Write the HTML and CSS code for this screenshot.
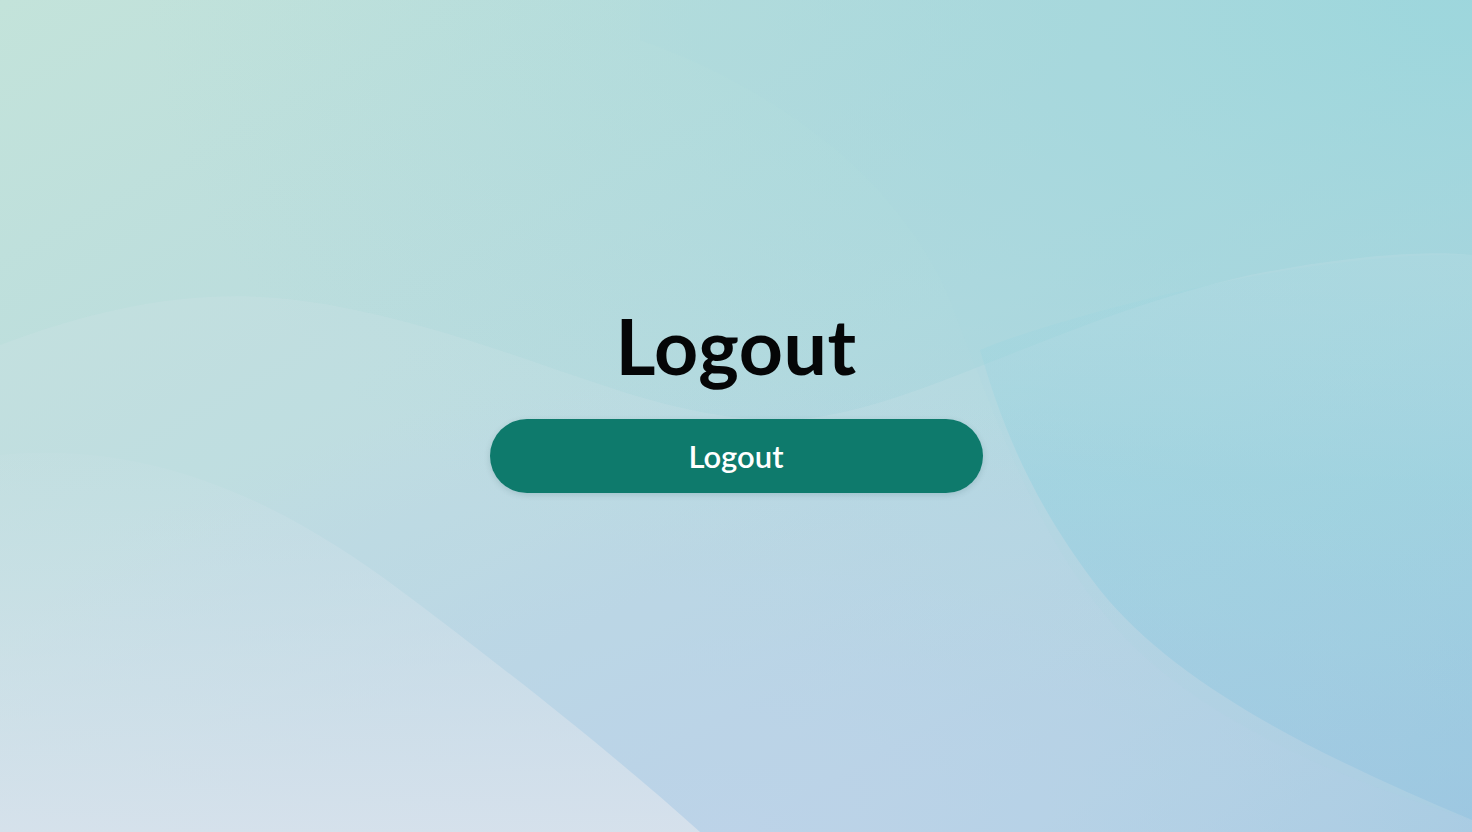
FILE: index.html
```html
<!DOCTYPE html>
<html lang="en">
<head>
<meta charset="utf-8">
<title>Logout</title>
<link rel="stylesheet" href="styles.css">
</head>
<body>
<svg class="backdrop" viewBox="0 0 1472 832" preserveAspectRatio="none" aria-hidden="true">
  <defs>
    <linearGradient id="base" x1="0" y1="0" x2="1" y2="1">
      <stop offset="0" stop-color="#c3e3da"/>
      <stop offset="0.5" stop-color="#b6d9e0"/>
      <stop offset="1" stop-color="#9cc5e1"/>
    </linearGradient>
    <radialGradient id="tr" cx="1" cy="0" r="0.9">
      <stop offset="0" stop-color="#98d6dc" stop-opacity="0.85"/>
      <stop offset="1" stop-color="#a6dada" stop-opacity="0"/>
    </radialGradient>
    <radialGradient id="bc" cx="0.5" cy="1" r="0.55">
      <stop offset="0" stop-color="#b8cfe9" stop-opacity="0.9"/>
      <stop offset="1" stop-color="#b8cfe9" stop-opacity="0"/>
    </radialGradient>
    <linearGradient id="bl" x1="0" y1="0" x2="0" y2="1">
      <stop offset="0" stop-color="#d4e3ea" stop-opacity="0.1"/>
      <stop offset="1" stop-color="#d8e2ec" stop-opacity="0.9"/>
    </linearGradient>
    <linearGradient id="rb" x1="0" y1="0" x2="0" y2="1">
      <stop offset="0" stop-color="#9ad6e0" stop-opacity="0.15"/>
      <stop offset="0.4" stop-color="#8ccfdf" stop-opacity="0.4"/>
      <stop offset="1" stop-color="#8fc0e0" stop-opacity="0.45"/>
    </linearGradient>
  </defs>
  <rect width="1472" height="832" fill="url(#base)"/>
  <rect width="1472" height="832" fill="url(#tr)"/>
  <rect width="1472" height="832" fill="url(#bc)"/>
  <path d="M0 345 C120 300 220 285 330 305 C520 340 640 420 780 420 C900 420 1050 320 1250 275 C1350 255 1430 250 1472 255 L1472 832 L0 832 Z" fill="#d8e8ec" fill-opacity="0.2"/>
  <path d="M0 455 C150 440 280 500 400 590 C520 680 620 760 700 832 L0 832 Z" fill="url(#bl)"/>
  <path d="M640 40 C780 90 900 180 950 300 C1000 430 1050 580 1160 670 C1260 750 1380 790 1472 820 L1472 0 L640 0 Z" fill="#a2d6df" fill-opacity="0.1"/>
  <path d="M980 350 C1050 320 1300 250 1472 255 L1472 820 C1330 760 1180 690 1100 590 C1030 500 1000 420 980 350 Z" fill="url(#rb)"/>
</svg>
<main class="page">
  <h1 class="title">Logout</h1>
  <button class="logout-btn" type="button">Logout</button>
</main>
</body>
</html>
```
FILE: styles.css
```css
* { box-sizing: border-box; }
html, body { margin: 0; height: 100%; }
body {
  font-family: Lato, "Noto Sans", "Liberation Sans", sans-serif;
  overflow: hidden;
  position: relative;
}
.backdrop {
  position: absolute;
  inset: 0;
  width: 100%;
  height: 100%;
  z-index: 0;
}
.page {
  position: relative;
  z-index: 1;
  height: 100%;
  display: flex;
  flex-direction: column;
  align-items: center;
  padding-top: 295px;
}
.title {
  margin: 0;
  font-size: 77px;
  font-weight: 700;
  color: #050607;
  line-height: 100px;
  letter-spacing: 0.5px;
}
.logout-btn {
  margin-top: 24px;
  width: 493px;
  height: 74px;
  border: none;
  border-radius: 37px;
  background: #0e7a6c;
  color: #ffffff;
  font-family: Lato, "Noto Sans", "Liberation Sans", sans-serif;
  font-size: 31px;
  font-weight: 600;
  padding-bottom: 2px;
  box-shadow: 0 2px 6px rgba(0, 60, 60, 0.15);
  cursor: pointer;
}
```
